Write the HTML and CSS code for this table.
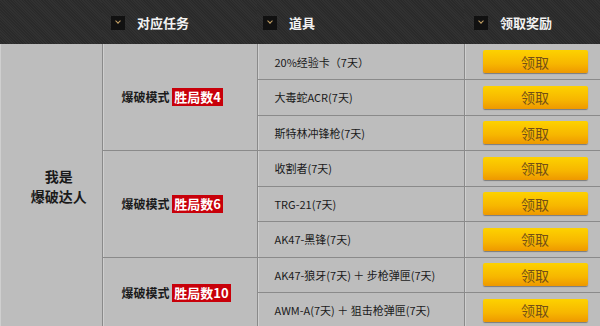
FILE: index.html
```html
<!DOCTYPE html>
<html lang="zh">
<head>
  <meta charset="UTF-8">
  <title>爆破达人奖励</title>
  <link rel="stylesheet" href="styles.css">
</head>
<body>
  <table class="reward-table">
    <thead>
      <tr>
        <th class="col-title"></th>
        <th class="col-task"><span class="arrow"></span>对应任务</th>
        <th class="col-item"><span class="arrow"></span>道具</th>
        <th class="col-get"><span class="arrow"></span>领取奖励</th>
      </tr>
    </thead>
    <tbody>
      <tr>
        <td class="title" rowspan="8">我是<br>爆破达人</td>
        <td class="task" rowspan="3">爆破模式 <span class="badge">胜局数4</span></td>
        <td class="item">20%经验卡（7天）</td>
        <td class="get"><button class="btn">领取</button></td>
      </tr>
      <tr>
        <td class="item">大毒蛇ACR(7天)</td>
        <td class="get"><button class="btn">领取</button></td>
      </tr>
      <tr>
        <td class="item">斯特林冲锋枪(7天)</td>
        <td class="get"><button class="btn">领取</button></td>
      </tr>
      <tr>
        <td class="task" rowspan="3">爆破模式 <span class="badge">胜局数6</span></td>
        <td class="item">收割者(7天)</td>
        <td class="get"><button class="btn">领取</button></td>
      </tr>
      <tr>
        <td class="item">TRG-21(7天)</td>
        <td class="get"><button class="btn">领取</button></td>
      </tr>
      <tr>
        <td class="item">AK47-黑锋(7天)</td>
        <td class="get"><button class="btn">领取</button></td>
      </tr>
      <tr>
        <td class="task" rowspan="2">爆破模式 <span class="badge">胜局数10</span></td>
        <td class="item">AK47-狼牙(7天) ＋ 步枪弹匣(7天)</td>
        <td class="get"><button class="btn">领取</button></td>
      </tr>
      <tr>
        <td class="item">AWM-A(7天) ＋ 狙击枪弹匣(7天)</td>
        <td class="get"><button class="btn">领取</button></td>
      </tr>
    </tbody>
  </table>
</body>
</html>
```

FILE: styles.css
```css
* {
  margin: 0;
  padding: 0;
  box-sizing: border-box;
}

body {
  background-color: #bdbdbd;
  font-family: "Microsoft YaHei", "Noto Sans CJK SC", sans-serif;
  color: #1a1a1a;
  overflow: hidden;
}

/* Table */
.reward-table {
  width: 600px;
  border-collapse: collapse;
  table-layout: fixed;
}

/* Header */
.reward-table thead th {
  height: 44px;
  background-color: #2c2c2c;
  background-image: repeating-linear-gradient(45deg, #2a2a2a 0 1px, #313131 1px 2px);
  color: #f2f2f2;
  font-size: 13px;
  font-weight: bold;
  text-align: left;
  padding-left: 9px;
}
.col-title { width: 102px; }
.col-task { width: 155px; }
.col-item { width: 207px; }
.col-get { width: 136px; }

.arrow {
  display: inline-block;
  width: 14px;
  height: 14px;
  margin-right: 12px;
  vertical-align: -2px;
  background-color: #111;
  position: relative;
}
.arrow::after {
  content: "";
  position: absolute;
  left: 5px;
  top: 3px;
  width: 3px;
  height: 3px;
  border-right: 1px solid #c8a468;
  border-bottom: 1px solid #c8a468;
  transform: rotate(45deg);
}
.reward-table thead .col-item { padding-left: 6px; }
.reward-table thead .col-get { padding-left: 10px; }

/* Body cells */
.reward-table td {
  height: 35.5px;
  border: 1px solid #8a8a8a;
  box-shadow: inset 1px 0 0 #cfcfcf;
}
.reward-table tbody tr:first-child td {
  border-top: none;
}
.title {
  border-left: none !important;
  text-align: center;
  padding-left: 16px;
  font-size: 14px;
  font-weight: bold;
  line-height: 20px;
}
.task {
  padding-left: 19px;
  font-size: 12px;
  font-weight: bold;
}
.badge {
  display: inline-block;
  background-color: #c8000a;
  color: #fff;
  font-size: 13px;
  padding: 0 2px;
  line-height: 18px;
}
.item {
  font-size: 11px;
  padding-left: 17px;
}
.get {
  border-right: none !important;
  padding-left: 18px;
}

/* Claim button */
.btn {
  display: block;
  width: 105px;
  height: 23px;
  border: none;
  border-radius: 2px;
  background: linear-gradient(#fdd200, #f7b600 60%, #ee9800);
  box-shadow: 0 1px 1px rgba(0, 0, 0, 0.35);
  color: #735016;
  font-family: inherit;
  font-size: 14px;
}
```
